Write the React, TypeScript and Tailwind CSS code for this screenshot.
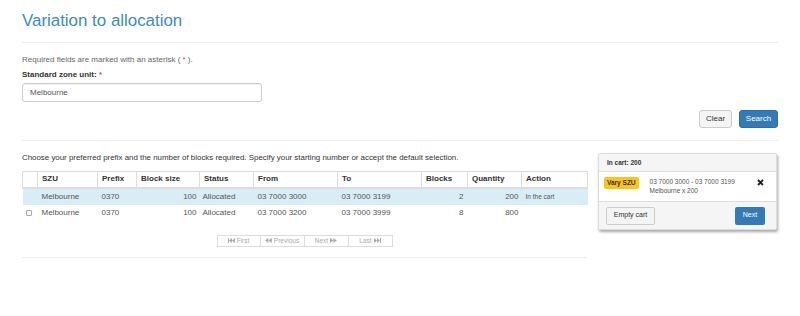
import React from 'react';

const cols = [
  { key: 'chk', label: '', w: 'w-[15px]' },
  { key: 'szu', label: 'SZU', w: 'w-[60px]' },
  { key: 'prefix', label: 'Prefix', w: 'w-[39px]' },
  { key: 'size', label: 'Block size', w: 'w-[63px]' },
  { key: 'status', label: 'Status', w: 'w-[54px]' },
  { key: 'from', label: 'From', w: 'w-[84px]' },
  { key: 'to', label: 'To', w: 'w-[84px]' },
  { key: 'blocks', label: 'Blocks', w: 'w-[46px]' },
  { key: 'qty', label: 'Quantity', w: 'w-[54px]' },
  { key: 'action', label: 'Action', w: 'w-[66px]' },
];

const rows = [
  { szu: 'Melbourne', prefix: '0370', size: '100', status: 'Allocated', from: '03 7000 3000', to: '03 7000 3199', blocks: '2', qty: '200', inCart: true },
  { szu: 'Melbourne', prefix: '0370', size: '100', status: 'Allocated', from: '03 7000 3200', to: '03 7000 3999', blocks: '8', qty: '800', inCart: false },
];

function Tri({ dir }: { dir: 'l' | 'r' }) {
  return dir === 'l' ? <path d="M4 0 L0 2.5 L4 5 Z" /> : <path d="M0 0 L4 2.5 L0 5 Z" />;
}

function PagerIcon({ kind }: { kind: 'first' | 'prev' | 'next' | 'last' }) {
  return (
    <svg width="7" height="5" viewBox="0 0 7 5" fill="currentColor" className="inline-block">
      {kind === 'first' && (
        <>
          <rect x="0" y="0" width="1" height="5" />
          <g transform="translate(1,0) scale(0.75,1)"><Tri dir="l" /></g>
          <g transform="translate(4,0) scale(0.75,1)"><Tri dir="l" /></g>
        </>
      )}
      {kind === 'prev' && (
        <>
          <g transform="translate(0,0) scale(0.85,1)"><Tri dir="l" /></g>
          <g transform="translate(3.4,0) scale(0.85,1)"><Tri dir="l" /></g>
        </>
      )}
      {kind === 'next' && (
        <>
          <g transform="translate(0,0) scale(0.85,1)"><Tri dir="r" /></g>
          <g transform="translate(3.4,0) scale(0.85,1)"><Tri dir="r" /></g>
        </>
      )}
      {kind === 'last' && (
        <>
          <g transform="translate(0,0) scale(0.75,1)"><Tri dir="r" /></g>
          <g transform="translate(3,0) scale(0.75,1)"><Tri dir="r" /></g>
          <rect x="6" y="0" width="1" height="5" />
        </>
      )}
    </svg>
  );
}

export default function App() {
  return (
    <div className="w-[800px] h-[316px] bg-white px-[22px] text-[#333] font-['Liberation_Sans',Arial,sans-serif] overflow-hidden">
      <h1 className="pt-[10px] text-[16.9px] leading-[22px] text-[#3b8bc8]">Variation to allocation</h1>
      <div className="mt-[10px] border-t border-[#eee]" />

      <p className="mt-[12px] text-[8px] leading-[10px] text-[#666]">
        Required fields are marked with an asterisk ( <span className="text-[#d9534f]">*</span> ).
      </p>
      <label className="mt-[5px] block text-[8px] leading-[10px] font-bold">
        Standard zone unit: <span className="text-[#d9534f]">*</span>
      </label>
      <div className="mt-[3px] flex h-[19px] w-[240px] items-center rounded-[3px] border border-[#ccc] px-[7px] text-[8px] text-[#555] shadow-[inset_0_1px_1px_rgba(0,0,0,0.06)]">
        Melbourne
      </div>

      <div className="mt-[8px] flex justify-end gap-[7px]">
        <button type="button" className="h-[18px] w-[33px] rounded-[3px] border border-[#ccc] bg-[#f4f4f4] text-[8px] text-[#333]">
          Clear
        </button>
        <button type="button" className="h-[18px] w-[39px] rounded-[3px] border border-[#2e6da4] bg-[#337ab7] text-[8px] text-white">
          Search
        </button>
      </div>
      <div className="mt-[12px] border-t border-[#eee]" />

      <div className="flex">
        <div className="w-[565px]">
          <p className="mt-[12px] text-[7.9px] leading-[10px] text-[#333]">
            Choose your preferred prefix and the number of blocks required. Specify your starting number or accept the default selection.
          </p>
          <table className="mt-[8px] w-[565px] table-fixed border-collapse text-[8px]">
            <thead>
              <tr className="h-[16px]">
                {cols.map((c) => (
                  <th
                    key={c.key}
                    className={`${c.w} border border-b-2 border-[#ddd] px-[4px] text-left font-bold text-[#333]`}
                  >
                    {c.label}
                  </th>
                ))}
              </tr>
            </thead>
            <tbody>
              {rows.map((r, i) => (
                <tr key={i} className={`h-[17px] ${r.inCart ? 'bg-[#d9edf7]' : ''}`}>
                  <td className="px-[2px]">
                    {!r.inCart && (
                      <span className="ml-[1px] block h-[6px] w-[6px] rounded-[1px] border border-[#aaa] bg-[#f8f8f8]" />
                    )}
                  </td>
                  <td className="px-[4px] text-[#555]">{r.szu}</td>
                  <td className="px-[4px] text-[#555]">{r.prefix}</td>
                  <td className="px-[3px] text-right text-[#555]">{r.size}</td>
                  <td className="px-[3px] text-[#555]">{r.status}</td>
                  <td className="px-[4px] text-[#555]">{r.from}</td>
                  <td className="px-[4px] text-[#555]">{r.to}</td>
                  <td className="px-[4px] text-right text-[#555]">{r.blocks}</td>
                  <td className="px-[3px] text-right text-[#555]">{r.qty}</td>
                  <td className="px-[4px] text-[6.5px] text-[#555]">{r.inCart ? 'In the cart' : ''}</td>
                </tr>
              ))}
            </tbody>
          </table>

          <div className="mt-[13px] flex justify-center">
            <div className="flex h-[12px] text-[6.5px] text-[#aaa]">
              {[
                { k: 'first' as const, t: 'First' },
                { k: 'prev' as const, t: 'Previous' },
                { k: 'next' as const, t: 'Next' },
                { k: 'last' as const, t: 'Last' },
              ].map((b, i) => (
                <div
                  key={b.k}
                  className={`w-[44px] flex items-center justify-center gap-[2px] border border-[#ddd] ${i > 0 ? 'border-l-0' : ''}`}
                >
                  {(b.k === 'first' || b.k === 'prev') && <PagerIcon kind={b.k} />}
                  <span>{b.t}</span>
                  {(b.k === 'next' || b.k === 'last') && <PagerIcon kind={b.k} />}
                </div>
              ))}
            </div>
          </div>
          <div className="mt-[10px] border-t border-[#eee]" />
        </div>

        <div className="ml-[11px] mt-[12px] w-[179px] self-start">
          <div className="rounded-[2px] border border-[#ddd] bg-white text-[6.5px] shadow-[1px_2px_3px_rgba(0,0,0,0.35)]">
            <div className="flex h-[18px] items-center border-b border-[#ddd] bg-[#f5f5f5] px-[8px] font-bold text-[#333]">
              In cart: 200
            </div>
            <div className="flex h-[29px] items-start pt-[5px] pl-[5px] pr-[12px]">
              <span className="rounded-[2px] bg-[#fcc419] px-[3px] py-[1px] font-bold text-[#333]">Vary SZU</span>
              <div className="ml-[11px] leading-[9px] text-[#555]">
                <div>03 7000 3000 - 03 7000 3199</div>
                <div>Melbourne x 200</div>
              </div>
              <svg width="7" height="7" viewBox="0 0 7 7" className="ml-auto mt-[2px]">
                <path d="M1 1 L6 6 M6 1 L1 6" stroke="#222" strokeWidth="1.8" />
              </svg>
            </div>
            <div className="flex h-[28px] items-center justify-between border-t border-[#ddd] bg-[#f5f5f5] px-[7px] pr-[11px]">
              <button type="button" className="h-[18px] w-[49px] rounded-[2px] border border-[#ccc] bg-[#f4f4f4] text-[7px] text-[#333]">
                Empty cart
              </button>
              <button type="button" className="h-[18px] w-[30px] rounded-[2px] bg-[#337ab7] text-[7px] text-white">
                Next
              </button>
            </div>
          </div>
        </div>
      </div>
    </div>
  );
}
